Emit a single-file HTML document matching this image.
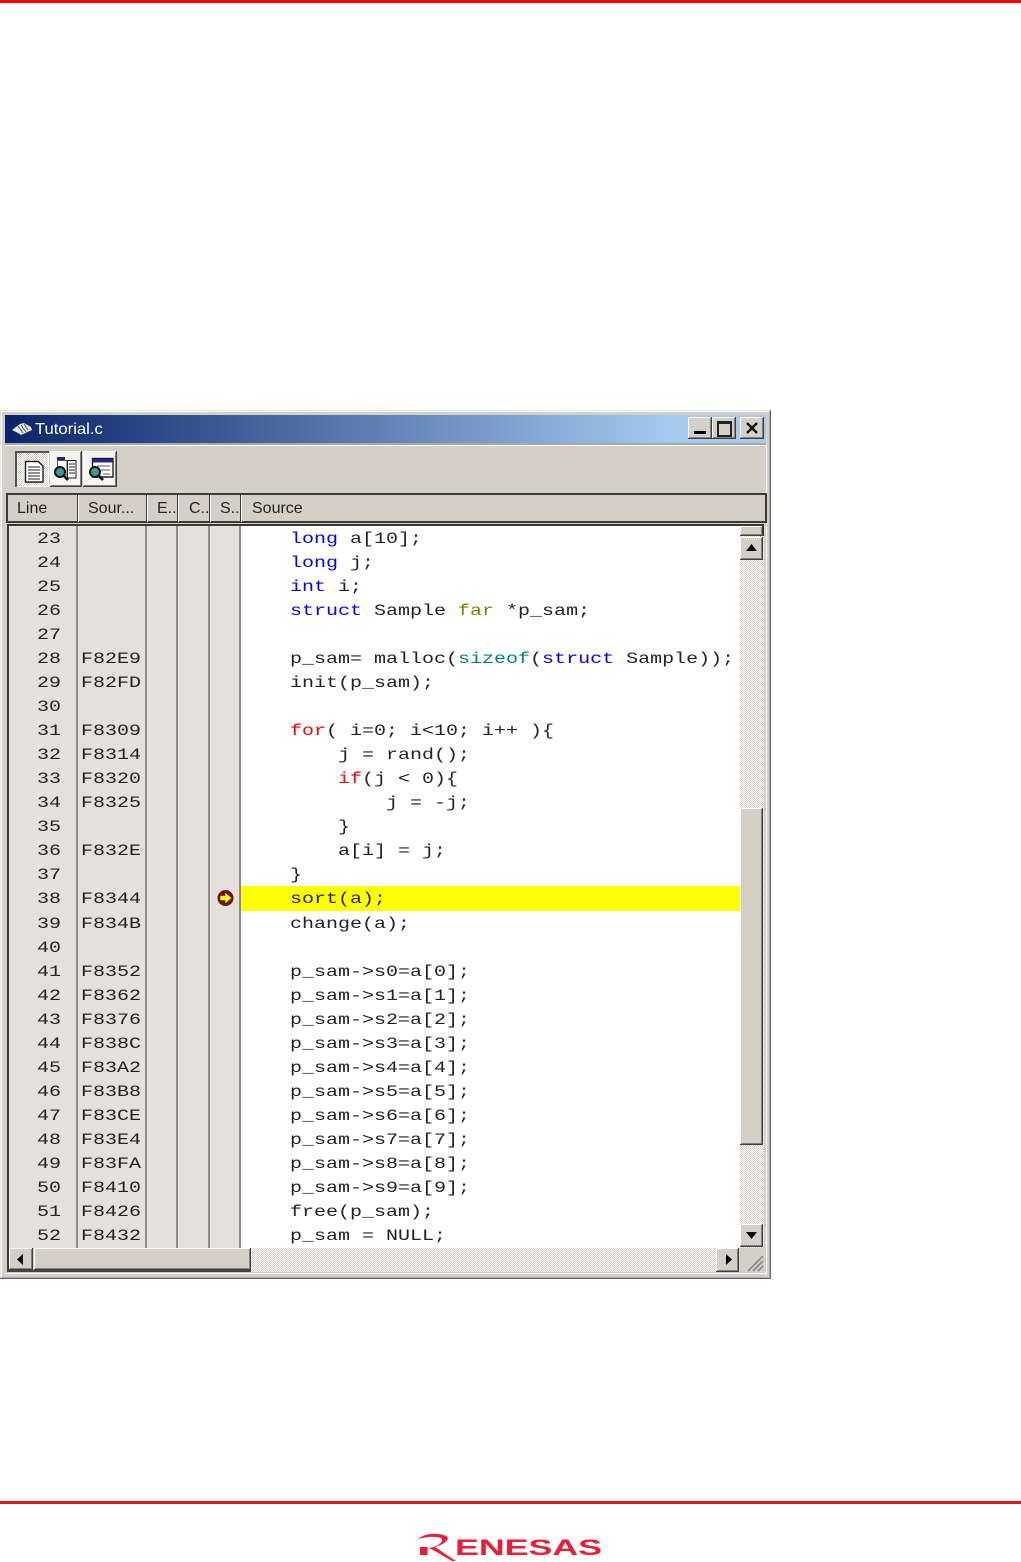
<!DOCTYPE html>
<html><head><meta charset="utf-8"><style>
html,body{margin:0;padding:0;background:#fff}
#p{position:relative;width:1021px;height:1562px;overflow:hidden;background:#fff}
#p div,#p pre,#p svg{position:absolute;margin:0}
.c{font:16px/24.03px "Liberation Mono",monospace;color:#222;white-space:pre;transform:scaleX(1.25);transform-origin:0 0}
.h{font:16px/20px "Liberation Sans",sans-serif;color:#222;top:499px;white-space:pre}
.v{background:#8e8c86;width:2px;top:526px;height:722px}
.vh{background:#3a3a38;width:1px;top:495px;height:27px}
.vl{background:#fff;width:1px;top:495px;height:27px}
.b{background:#d4d0c8;box-shadow:inset -1px -1px 0 #404040,inset 1px 1px 0 #fff,inset -2px -2px 0 #808080}
.d{background:repeating-conic-gradient(#fff 0 25%,#d4d0c8 0 50%) 0 0/2px 2px}
.k{color:#00f}.r{color:#f00}.o{color:#808000}.t{color:#008080}
</style></head><body><div id="p">
<div style="left:0;top:0;width:1021px;height:3px;background:#f00"></div>
<div style="left:0;top:1501px;width:1021px;height:3px;background:#e8141c"></div>

<div style="left:0;top:410px;width:771px;height:869px;background:#d4d0c8;box-shadow:inset -1px -1px 0 #666,inset 1px 1px 0 #e8e6e1,inset -2px -2px 0 #aaa,inset 2px 2px 0 #fff"></div>
<div style="left:5px;top:415px;width:761px;height:28px;background:linear-gradient(90deg,#0a246a,#a6caf0 88%)"></div>
<div style="left:5px;top:443px;width:761px;height:2px;background:#aaa8a2"></div>
<div style="left:5px;top:445px;width:761px;height:1px;background:#fff"></div>
<div style="left:766px;top:446px;width:1px;height:827px;background:#fff"></div>
<div style="left:5px;top:1273px;width:762px;height:1px;background:#fff"></div>
<svg style="left:11px;top:421px" width="22" height="16" viewBox="0 0 22 16"><path d="M1 9 L9 3 L13 2 L20 6 L21 9 L10 14 L7 12 Z" fill="#e8e8e8"/><path d="M7 5l5 7M10 4l5 7M13 3l4 6" stroke="#555" stroke-width="1"/></svg>
<div style="left:35px;top:419px;font:16px/21px 'Liberation Sans',sans-serif;color:#fff;white-space:pre;transform:scaleX(1.04);transform-origin:0 0">Tutorial.c</div>
<div class="b" style="left:688px;top:417px;width:24px;height:22px"></div>
<div style="left:694px;top:431px;width:12px;height:3px;background:#000"></div>
<div class="b" style="left:712px;top:417px;width:24px;height:22px"></div>
<div style="left:717px;top:421px;width:11px;height:11px;border:2px solid #222;border-top-width:3px"></div>
<div class="b" style="left:740px;top:417px;width:24px;height:22px"></div>
<svg style="left:745px;top:421px" width="14" height="14"><path d="M2 2L12 12M12 2L2 12" stroke="#111" stroke-width="2.400"/></svg>

<div class="d" style="left:15px;top:451px;width:34px;height:36px;box-shadow:inset 2px 2px 0 #555,inset -1px -1px 0 #fff"></div>
<div class="b" style="left:50px;top:451px;width:32px;height:36px;background:#f6f5f1"></div>
<div class="b" style="left:83px;top:451px;width:34px;height:36px;background:#f6f5f1"></div>
<svg style="left:15px;top:451px" width="105" height="36" viewBox="0 0 105 36">
<path d="M10.500 10.500H23L28 15V31H10.500Z" fill="#fff" stroke="#222" stroke-width="1.400"/><path d="M13 16H25M13 19H25M13 22H25M13 25H25M13 28H25" stroke="#222"/>
<path d="M42 6H50V9H42Z" fill="#23238e"/><path d="M42.500 9.500H52V24H42.500Z" fill="#fff" stroke="#555"/><path d="M52.500 9.500H61V27H52.500Z" fill="#fff" stroke="#222"/><path d="M54 13H60M54 16H60M54 19H60M54 22H60" stroke="#222"/>
<circle cx="45" cy="21" r="5" fill="#3a9a9a" stroke="#111" stroke-width="2"/><path d="M48.500 24.500L53 29" stroke="#111" stroke-width="2.600"/>
<path d="M77.500 7.500H98V26H77.500Z" fill="#fff" stroke="#222" stroke-width="1.400"/><path d="M78 8H98V11.500H78Z" fill="#23238e"/><path d="M82 15H95M86 19H95M88 23H95" stroke="#555"/>
<circle cx="80" cy="21" r="5" fill="#3a9a9a" stroke="#111" stroke-width="2"/><path d="M83.500 24.500L88 29" stroke="#111" stroke-width="2.600"/>
</svg>

<div style="left:6px;top:493px;width:757px;height:26px;border:2px solid #3a3a38;background:#d4d0c8"></div>
<div class="vl" style="left:78px"></div><div class="vh" style="left:77px"></div>
<div class="vl" style="left:147px"></div><div class="vh" style="left:146px"></div>
<div class="vl" style="left:178px"></div><div class="vh" style="left:177px"></div>
<div class="vl" style="left:210px"></div><div class="vh" style="left:209px"></div>
<div class="vl" style="left:241px"></div><div class="vh" style="left:240px"></div>
<div class="h" style="left:17px">Line</div>
<div class="h" style="left:88px">Sour...</div>
<div class="h" style="left:157px">E..</div>
<div class="h" style="left:189px">C..</div>
<div class="h" style="left:220px">S..</div>
<div class="h" style="left:252px">Source</div>

<div style="left:7px;top:524px;width:756px;height:748px;background:#3a3a38"></div>
<div style="left:9px;top:526px;width:754px;height:745px;background:#fff"></div>
<div style="left:9px;top:526px;width:232px;height:722px;background:#e4e1dc"></div>
<div class="v" style="left:76px"></div>
<div class="v" style="left:145px"></div>
<div class="v" style="left:176px"></div>
<div class="v" style="left:208px"></div>
<div class="v" style="left:239px"></div>
<div style="left:241px;top:886px;width:499px;height:25px;background:#ff0"></div>

<pre class="c" style="left:37px;top:527px">23
24
25
26
27
28
29
30
31
32
33
34
35
36
37
38
39
40
41
42
43
44
45
46
47
48
49
50
51
52</pre>
<pre class="c" style="left:81px;top:527px">





F82E9
F82FD

F8309
F8314
F8320
F8325

F832E

F8344
F834B

F8352
F8362
F8376
F838C
F83A2
F83B8
F83CE
F83E4
F83FA
F8410
F8426
F8432</pre>
<div style="left:9px;top:1248px;width:754px;height:22px;background:#d4d0c8"></div>
<svg style="left:216px;top:889px" width="20" height="20" viewBox="0 0 20 20"><circle cx="9.500" cy="9" r="8" fill="#7a0f0f"/><path d="M4 6.500H9V3L16 9L9 15V11.500H4Z" fill="#ff0" stroke="#222" stroke-width=".6"/></svg>
<pre class="c" style="left:241.500px;top:527px">    <span class="k">long</span> a[10];
    <span class="k">long</span> j;
    <span class="k">int</span> i;
    <span class="k">struct</span> Sample <span class="o">far</span> *p_sam;

    p_sam= malloc(<span class="t">sizeof</span>(<span class="k">struct</span> Sample));
    init(p_sam);

    <span class="r">for</span>( i=0; i&lt;10; i++ ){
        j = rand();
        <span class="r">if</span>(j &lt; 0){
            j = -j;
        }
        a[i] = j;
    }
    sort(a);
    change(a);

    p_sam-&gt;s0=a[0];
    p_sam-&gt;s1=a[1];
    p_sam-&gt;s2=a[2];
    p_sam-&gt;s3=a[3];
    p_sam-&gt;s4=a[4];
    p_sam-&gt;s5=a[5];
    p_sam-&gt;s6=a[6];
    p_sam-&gt;s7=a[7];
    p_sam-&gt;s8=a[8];
    p_sam-&gt;s9=a[9];
    free(p_sam);
    p_sam = NULL;</pre>

<div class="d" style="left:740px;top:536px;width:24px;height:712px"></div>
<div style="left:763px;top:524px;width:1px;height:12px;background:#3a3a38"></div>
<div class="b" style="left:740px;top:526px;width:23px;height:10px"></div>
<div class="b" style="left:740px;top:537px;width:23px;height:23px"></div>
<svg style="left:745px;top:543px" width="14" height="10"><path d="M6.500 1L1 8H12Z" fill="#000"/></svg>
<div class="b" style="left:740px;top:808px;width:23px;height:337px"></div>
<div class="b" style="left:740px;top:1224px;width:23px;height:23px"></div>
<svg style="left:745px;top:1231px" width="14" height="10"><path d="M1 1H12L6.500 8Z" fill="#000"/></svg>

<div class="d" style="left:251px;top:1248px;width:465px;height:24px"></div>
<div class="b" style="left:9px;top:1248px;width:24px;height:22px"></div>
<svg style="left:15px;top:1253px" width="10" height="14"><path d="M8 1V12L2 6.500Z" fill="#000"/></svg>
<div class="b" style="left:34px;top:1248px;width:217px;height:22px"></div>
<div style="left:7px;top:1270px;width:244px;height:2px;background:#444"></div>
<div class="b" style="left:716px;top:1248px;width:23px;height:24px"></div>
<svg style="left:724px;top:1253px" width="10" height="14"><path d="M2 1V12L8 6.500Z" fill="#000"/></svg>
<div style="left:739px;top:1248px;width:27px;height:25px;background:#d4d0c8"></div>
<svg style="left:745px;top:1253px" width="20" height="20"><path d="M3 18L18 3M8 18L18 8M13 18L18 13" stroke="#888" stroke-width="1.600"/></svg>

<svg style="left:415px;top:1530px" width="192" height="32" viewBox="0 0 192 32">
<path d="M3 9C8 5 14 3.500 22 4C30 4.500 35 7 32 10C29 14 24 16 20 17C26 21 33 26 41 31L37 31C30 27 22 22 14 18C20 17 25 15 27 11C28 8 24 7 20 7C13 6.500 8 8 3 9Z" fill="#ee1c34"/>
<rect x="5" y="17" width="7.500" height="8" fill="#ee1c34"/>
<text x="40" y="25" font-family="Liberation Sans,sans-serif" font-weight="bold" font-size="22" fill="#ee1c34" textLength="147" lengthAdjust="spacingAndGlyphs">ENESAS</text>
</svg>
</div></body></html>
